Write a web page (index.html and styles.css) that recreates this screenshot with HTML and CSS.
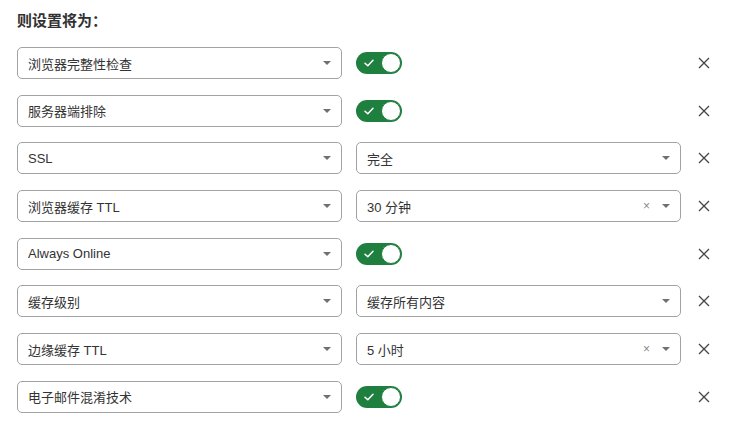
FILE: index.html
```html
<!DOCTYPE html>
<html lang="zh-CN">
<head>
<meta charset="utf-8">
<title>则设置将为</title>
<link rel="stylesheet" href="styles.css">
</head>
<body>
<div class="page">
  <h2 class="title">则设置将为：</h2>
  <div class="rules">
    <div class="row">
      <div class="select"><span class="value">浏览器完整性检查</span><span class="caret"></span></div>
      <div class="ctl"><span class="toggle"><svg class="check" viewBox="0 0 10 8"><path d="M1 4.2 L3.8 6.8 L9 1.2"/></svg><span class="knob"></span></span></div>
      <svg class="remove" viewBox="0 0 12 12"><path d="M1 1 L11 11 M11 1 L1 11"/></svg>
    </div>
    <div class="row">
      <div class="select"><span class="value">服务器端排除</span><span class="caret"></span></div>
      <div class="ctl"><span class="toggle"><svg class="check" viewBox="0 0 10 8"><path d="M1 4.2 L3.8 6.8 L9 1.2"/></svg><span class="knob"></span></span></div>
      <svg class="remove" viewBox="0 0 12 12"><path d="M1 1 L11 11 M11 1 L1 11"/></svg>
    </div>
    <div class="row">
      <div class="select"><span class="value">SSL</span><span class="caret"></span></div>
      <div class="select"><span class="value">完全</span><span class="caret"></span></div>
      <svg class="remove" viewBox="0 0 12 12"><path d="M1 1 L11 11 M11 1 L1 11"/></svg>
    </div>
    <div class="row">
      <div class="select"><span class="value">浏览器缓存 TTL</span><span class="caret"></span></div>
      <div class="select"><span class="value">30 分钟</span><span class="clear">×</span><span class="caret"></span></div>
      <svg class="remove" viewBox="0 0 12 12"><path d="M1 1 L11 11 M11 1 L1 11"/></svg>
    </div>
    <div class="row">
      <div class="select"><span class="value">Always Online</span><span class="caret"></span></div>
      <div class="ctl"><span class="toggle"><svg class="check" viewBox="0 0 10 8"><path d="M1 4.2 L3.8 6.8 L9 1.2"/></svg><span class="knob"></span></span></div>
      <svg class="remove" viewBox="0 0 12 12"><path d="M1 1 L11 11 M11 1 L1 11"/></svg>
    </div>
    <div class="row">
      <div class="select"><span class="value">缓存级别</span><span class="caret"></span></div>
      <div class="select"><span class="value">缓存所有内容</span><span class="caret"></span></div>
      <svg class="remove" viewBox="0 0 12 12"><path d="M1 1 L11 11 M11 1 L1 11"/></svg>
    </div>
    <div class="row">
      <div class="select"><span class="value">边缘缓存 TTL</span><span class="caret"></span></div>
      <div class="select"><span class="value">5 小时</span><span class="clear">×</span><span class="caret"></span></div>
      <svg class="remove" viewBox="0 0 12 12"><path d="M1 1 L11 11 M11 1 L1 11"/></svg>
    </div>
    <div class="row">
      <div class="select"><span class="value">电子邮件混淆技术</span><span class="caret"></span></div>
      <div class="ctl"><span class="toggle"><svg class="check" viewBox="0 0 10 8"><path d="M1 4.2 L3.8 6.8 L9 1.2"/></svg><span class="knob"></span></span></div>
      <svg class="remove" viewBox="0 0 12 12"><path d="M1 1 L11 11 M11 1 L1 11"/></svg>
    </div>
  </div>
</div>
</body>
</html>
```

FILE: styles.css
```css
* { box-sizing: border-box; }
html, body { margin: 0; padding: 0; background: #fff; }
body {
  font-family: "Liberation Sans", "Noto Sans CJK SC", sans-serif;
  color: #313131;
  width: 740px;
  height: 422px;
  overflow: hidden;
}
.page {
  padding: 10px 0 0 17px;
}
.title {
  margin: 0;
  font-size: 15px;
  line-height: 21px;
  font-weight: 600;
  color: #313131;
}
.rules {
  display: flex;
  flex-direction: column;
  gap: 15.7px;
  margin-top: 16px;
}
.row {
  display: grid;
  grid-template-columns: 325px 325px 12px;
  column-gap: 14px;
  align-items: center;
  height: 32px;
}
.row .remove { margin-left: 3px; }
.select {
  height: 32px;
  border: 1px solid #a2a2a2;
  border-radius: 5px;
  display: flex;
  align-items: center;
  padding: 0 10px 0 10px;
  font-size: 13px;
  color: #333;
  background: #fff;
}
.value { flex: 1; white-space: nowrap; }
.caret {
  width: 0;
  height: 0;
  border-left: 4.5px solid transparent;
  border-right: 4.5px solid transparent;
  border-top: 4.5px solid #707070;
}
.clear {
  font-size: 12px;
  color: #8a8a8a;
  margin-right: 12px;
  line-height: 1;
}
.ctl { display: flex; align-items: center; height: 32px; }
.toggle {
  position: relative;
  width: 46px;
  height: 22px;
  border-radius: 11px;
  background: #1f7f3f;
  display: inline-block;
}
.check {
  position: absolute;
  left: 8px;
  top: 7px;
  width: 10px;
  height: 8px;
  fill: none;
  stroke: #fff;
  stroke-width: 1.5;
  stroke-linecap: round;
  stroke-linejoin: round;
}
.knob {
  position: absolute;
  right: 1px;
  top: 1px;
  width: 20px;
  height: 20px;
  border-radius: 50%;
  background: #fff;
  border: 1.5px solid #1f7f3f;
}
.remove {
  width: 12px;
  height: 12px;
  fill: none;
  stroke: #444;
  stroke-width: 1.3;
}
```
